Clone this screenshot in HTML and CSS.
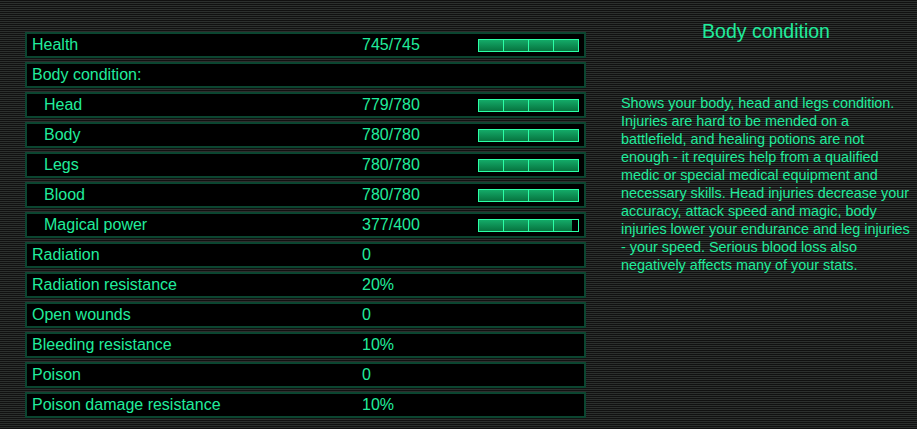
FILE: index.html
```html
<!DOCTYPE html>
<html lang="en">
<head>
  <meta charset="UTF-8">
  <title>Body condition</title>
  <link rel="stylesheet" href="styles.css">
</head>
<body>
  <div class="screen">
    <!-- stats list -->
    <div class="stats">
      <div class="row"><span class="name">Health</span><span class="value">745/745</span><div class="bar"><div class="fill" style="width: 100%"></div></div></div>
      <div class="row"><span class="name">Body condition:</span></div>
      <div class="row sub"><span class="name">Head</span><span class="value">779/780</span><div class="bar"><div class="fill" style="width: 99.9%"></div></div></div>
      <div class="row sub"><span class="name">Body</span><span class="value">780/780</span><div class="bar"><div class="fill" style="width: 100%"></div></div></div>
      <div class="row sub"><span class="name">Legs</span><span class="value">780/780</span><div class="bar"><div class="fill" style="width: 100%"></div></div></div>
      <div class="row sub"><span class="name">Blood</span><span class="value">780/780</span><div class="bar"><div class="fill" style="width: 100%"></div></div></div>
      <div class="row sub"><span class="name">Magical power</span><span class="value">377/400</span><div class="bar"><div class="fill" style="width: 94.25%"></div></div></div>
      <div class="row"><span class="name">Radiation</span><span class="value">0</span></div>
      <div class="row"><span class="name">Radiation resistance</span><span class="value">20%</span></div>
      <div class="row"><span class="name">Open wounds</span><span class="value">0</span></div>
      <div class="row"><span class="name">Bleeding resistance</span><span class="value">10%</span></div>
      <div class="row"><span class="name">Poison</span><span class="value">0</span></div>
      <div class="row"><span class="name">Poison damage resistance</span><span class="value">10%</span></div>
    </div>

    <!-- description -->
    <div class="info">
      <h2>Body condition</h2>
      <p>Shows your body, head and legs condition. Injuries are hard to be mended on a battlefield, and healing potions are not enough - it requires help from a qualified medic or special medical equipment and necessary skills. Head injuries decrease your accuracy, attack speed and magic, body injuries lower your endurance and leg injuries - your speed. Serious blood loss also negatively affects many of your stats.</p>
    </div>
  </div>
</body>
</html>
```

FILE: styles.css
```css
* {
  box-sizing: border-box;
  margin: 0;
  padding: 0;
}

body {
  font-family: 'Liberation Sans', Arial, sans-serif;
  color: #20ec9c;
  background: repeating-linear-gradient(to bottom, #111 0px, #111 1px, #2c302e 1px, #2c302e 2px);
  height: 429px;
  overflow: hidden;
}

.screen {
  display: flex;
  padding: 32px 0 0 25px;
}

.stats {
  width: 561px;
  display: flex;
  flex-direction: column;
  gap: 4px;
}

.row {
  height: 26px;
  background: #000;
  border: 2px solid #0b4530;
  display: flex;
  align-items: center;
  font-size: 16px;
  padding-left: 5px;
}

.row .name {
  width: 330px;
}

.row.sub .name {
  padding-left: 12px;
}

.row .value {
  width: 116px;
}

.bar {
  width: 101px;
  height: 13px;
  border: 1px solid #2bffa6;
  background: #000;
  position: relative;
}

.fill {
  height: 100%;
  background: linear-gradient(to bottom, #14aa68, #07733f);
}

/* segment lines over the fill */
.bar::after {
  content: "";
  position: absolute;
  top: 0;
  bottom: 0;
  left: 0;
  right: 0;
  background: linear-gradient(to right, transparent 24px, #2bffa6 24px, #2bffa6 25px, transparent 25px,
    transparent 49px, #2bffa6 49px, #2bffa6 50px, transparent 50px,
    transparent 74px, #2bffa6 74px, #2bffa6 75px, transparent 75px);
}

.info {
  width: 331px;
  padding-left: 35px;
}

.info h2 {
  font-size: 19.5px;
  font-weight: normal;
  text-align: center;
  margin-top: -12px;
  margin-right: 6px;
}

.info p {
  font-size: 14.4px;
  line-height: 18px;
  margin-top: 51px;
  width: 289px;
}
```
